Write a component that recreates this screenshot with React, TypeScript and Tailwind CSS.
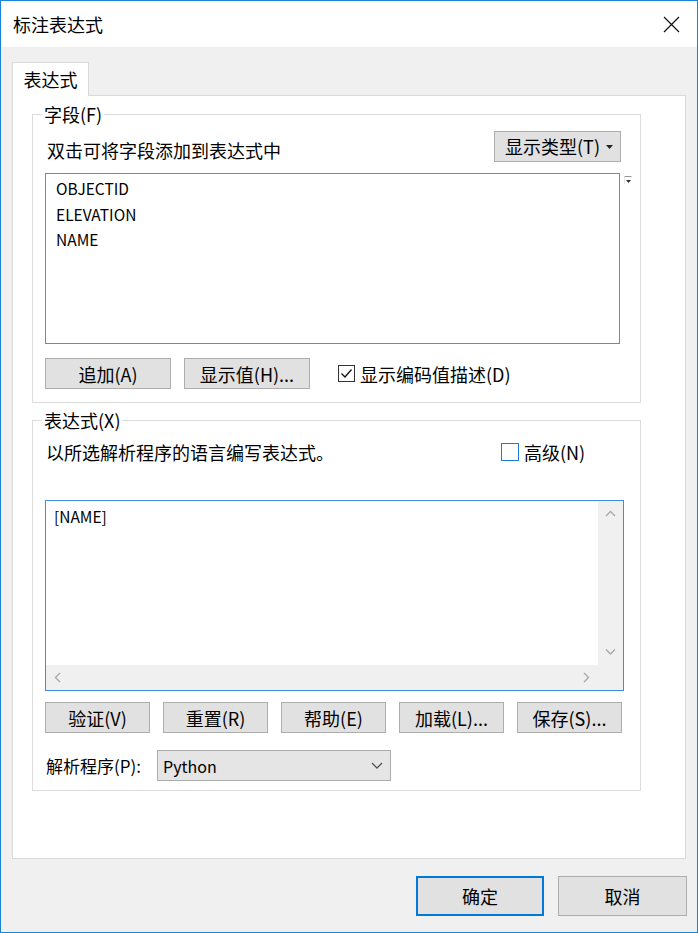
import type { ReactNode } from "react";

const font = {
  fontFamily: '"Noto Sans CJK SC", "Noto Sans", sans-serif',
};

export default function App() {
  return (
    <div
      style={font}
      className="flex h-[933px] w-[698px] flex-col border border-[#1883d7] bg-[#f0f0f0] text-[#000]"
    >
      {/* title bar */}
      <div className="flex h-[46px] shrink-0 items-center justify-between bg-white pl-[12px] pr-[16px]">
        <span className="text-[18px] leading-none">标注表达式</span>
        <svg width="17" height="17" viewBox="0 0 17 17" className="mr-[1px]">
          <path d="M1 1 L16 16 M16 1 L1 16" stroke="#111" strokeWidth="1.2" fill="none" />
        </svg>
      </div>

      <div className="flex flex-1 flex-col pl-[11px] pr-[10px] pt-[15px]">
        {/* tab */}
        <div className="relative z-10 -mb-px flex h-[34px] w-[77px] items-center justify-center border border-b-0 border-[#d9d9d9] bg-white text-[18px]">
          表达式
        </div>

        {/* panel */}
        <div className="h-[764px] w-[674px] border border-[#d9d9d9] bg-white pl-[19px] pt-[7px]">
          <GroupBox title="字段(F)">
            <div className="pl-[12px] pt-[6px]">
              <div className="flex w-[576px] items-end justify-between">
                <span className="pl-[2px] text-[18px] leading-[24px]">双击可将字段添加到表达式中</span>
                <button className="flex h-[31px] w-[127px] items-center justify-center border border-[#adadad] bg-[#e1e1e1] pl-[4px] text-[18px]">
                  显示类型(T)
                  <svg width="9" height="6" viewBox="0 0 9 6" className="ml-[5px]">
                    <path d="M1 1 L8 1 L4.5 5 Z" fill="#222" />
                  </svg>
                </button>
              </div>

              <div className="mt-[11px] flex">
                <div className="h-[171px] w-[575px] border border-[#828790] bg-white pl-[10px] pt-[2px] text-[15.5px] leading-[25.5px]">
                  <div>OBJECTID</div>
                  <div>ELEVATION</div>
                  <div>NAME</div>
                </div>
                <svg width="8" height="9" viewBox="0 0 8 9" className="ml-[4px] mt-[3px]">
                  <path d="M0.5 0.5 L7.5 0.5" stroke="#999" strokeWidth="1" />
                  <path d="M0.5 0.5 L0.5 8.5" stroke="#ccc" strokeWidth="1" strokeDasharray="1 1" />
                  <path d="M2 4 L7 4 L4.5 7 Z" fill="#333" />
                </svg>
              </div>

              <div className="mt-[14px] flex items-center pb-[13px]">
                <Btn w="w-[126px]">追加(A)</Btn>
                <div className="ml-[13px]">
                  <Btn w="w-[126px]">显示值(H)...</Btn>
                </div>
                <div className="ml-[28px] flex items-center">
                  <span className="flex h-[17px] w-[17px] items-center justify-center border border-[#333] bg-white">
                    <svg width="13" height="11" viewBox="0 0 13 11">
                      <path d="M1.5 5.5 L5 9 L11.5 1.5" stroke="#111" strokeWidth="1.3" fill="none" />
                    </svg>
                  </span>
                  <span className="ml-[5px] text-[18px] leading-[24px]">显示编码值描述(D)</span>
                </div>
              </div>
            </div>
          </GroupBox>

          <div className="mt-[6px]">
            <GroupBox title="表达式(X)">
              <div className="pl-[12px] pt-[9px]">
                <div className="grid h-[24px] grid-cols-[456px_1fr] items-center">
                  <span className="pl-[1px] text-[18px] leading-[24px]">以所选解析程序的语言编写表达式。</span>
                  <div className="flex items-center">
                    <span className="h-[18px] w-[18px] border border-[#1e7ad6] bg-white" />
                    <span className="ml-[5px] text-[18px] leading-[24px]">高级(N)</span>
                  </div>
                </div>

                {/* expression box */}
                <div className="mt-[36px] flex h-[191px] w-[579px] flex-col border border-[#3c8fe0] bg-white">
                  <div className="flex min-h-0 flex-1">
                    <div className="flex-1 pl-[8px] pt-[3px] text-[15.5px] leading-[24px]">[NAME]</div>
                    <div className="flex w-[25px] flex-col items-center justify-between bg-[#f0f0f0] py-[9px]">
                      <Chevron d="M1 6 L5.5 1.5 L10 6" />
                      <Chevron d="M1 1.5 L5.5 6 L10 1.5" />
                    </div>
                  </div>
                  <div className="flex h-[25px] shrink-0 bg-[#f0f0f0]">
                    <div className="flex flex-1 items-center justify-between pl-[8px] pr-[8px]">
                      <svg width="7" height="11" viewBox="0 0 7 11">
                        <path d="M6 1 L1.5 5.5 L6 10" stroke="#a8a8a8" strokeWidth="1.4" fill="none" />
                      </svg>
                      <svg width="7" height="11" viewBox="0 0 7 11">
                        <path d="M1 1 L5.5 5.5 L1 10" stroke="#a8a8a8" strokeWidth="1.4" fill="none" />
                      </svg>
                    </div>
                    <div className="w-[25px]" />
                  </div>
                </div>

                <div className="mt-[11px] flex gap-[13px]">
                  <Btn w="w-[105px]">验证(V)</Btn>
                  <Btn w="w-[105px]">重置(R)</Btn>
                  <Btn w="w-[105px]">帮助(E)</Btn>
                  <Btn w="w-[105px]">加载(L)...</Btn>
                  <Btn w="w-[105px]">保存(S)...</Btn>
                </div>

                <div className="mt-[17px] grid grid-cols-[112px_234px] items-center pb-[9px]">
                  <span className="pl-[1px] text-[17px] leading-[24px]">解析程序(P):</span>
                  <div className="flex h-[31px] items-center justify-between border border-[#acacac] bg-[#e5e5e5] pl-[5px] pr-[7px]">
                    <span className="text-[16px] leading-[24px]">Python</span>
                    <svg width="12" height="7" viewBox="0 0 12 7">
                      <path d="M1 1 L6 6 L11 1" stroke="#555" strokeWidth="1.3" fill="none" />
                    </svg>
                  </div>
                </div>
              </div>
            </GroupBox>
          </div>
        </div>

        {/* dialog buttons */}
        <div className="mt-[17px] flex justify-end gap-[14px]">
          <button className="flex h-[40px] w-[128px] items-center justify-center border-2 border-[#0078d7] bg-[#e1e1e1] text-[18px]">
            确定
          </button>
          <button className="flex h-[40px] w-[129px] items-center justify-center border border-[#adadad] bg-[#e1e1e1] text-[18px]">
            取消
          </button>
        </div>
      </div>
    </div>
  );
}

function GroupBox({ title, children }: { title: string; children: ReactNode }) {
  return (
    <fieldset className="w-[609px] border border-[#dcdcdc] p-0">
      <legend className="ml-[9px] px-[2px] text-[18px] leading-[22px]">{title}</legend>
      {children}
    </fieldset>
  );
}

function Btn({ w, children }: { w: string; children: ReactNode }) {
  return (
    <button
      className={`flex h-[31px] ${w} items-center justify-center border border-[#adadad] bg-[#e1e1e1] text-[18px] leading-none`}
    >
      {children}
    </button>
  );
}

function Chevron({ d }: { d: string }) {
  return (
    <svg width="11" height="8" viewBox="0 0 11 8">
      <path d={d} stroke="#a8a8a8" strokeWidth="1.4" fill="none" />
    </svg>
  );
}
